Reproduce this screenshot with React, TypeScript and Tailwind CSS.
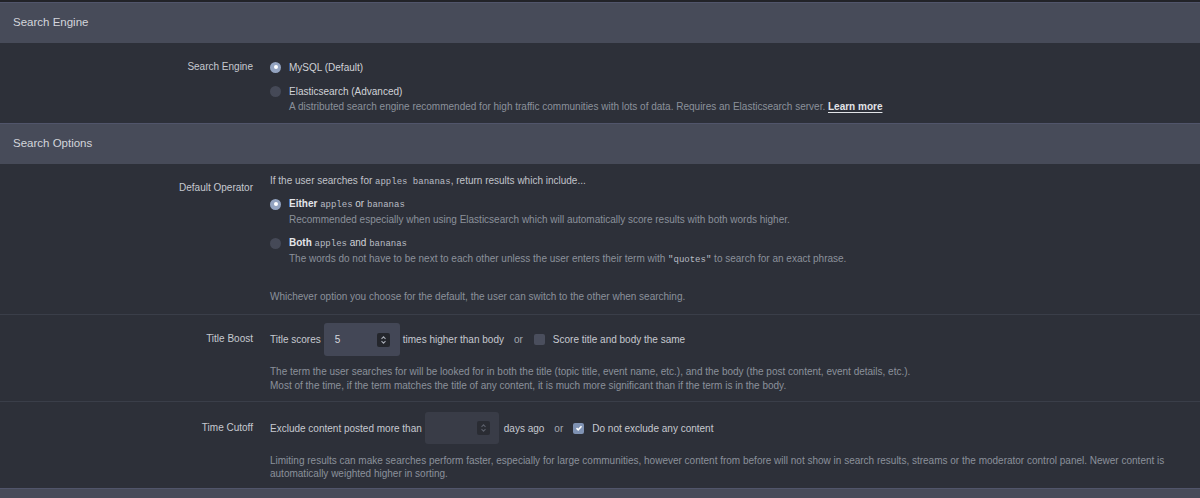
import React from "react";

const font = "font-['Liberation_Sans',Arial,sans-serif]";
const mono = "font-['Liberation_Mono',monospace] text-[9px] text-[#b9bcc4]";

function Header({ title }: { title: string }) {
  return (
    <div className="h-[41px] bg-[#474b59] border-t border-[#51556b] px-[13px] flex items-center text-[11.5px] text-[#d3d5db]">
      {title}
    </div>
  );
}

function Row({
  label,
  labelClass = "",
  className = "",
  last = false,
  children,
}: {
  label: string;
  labelClass?: string;
  className?: string;
  last?: boolean;
  children: React.ReactNode;
}) {
  return (
    <div className={`flex ${last ? "" : "border-b border-[#3a3e49]"} ${className}`}>
      <div className={`w-[253px] shrink-0 text-right text-[#c6c9d0] leading-[16px] ${labelClass}`}>{label}</div>
      <div className="ml-[17px] flex-1 min-w-0">{children}</div>
    </div>
  );
}

function Radio({ checked }: { checked?: boolean }) {
  return checked ? (
    <span className="w-[11px] h-[11px] rounded-full bg-[#93a3c0] flex items-center justify-center shrink-0">
      <span className="w-[4px] h-[4px] rounded-full bg-white" />
    </span>
  ) : (
    <span className="w-[11px] h-[11px] rounded-full bg-[#454957] shrink-0" />
  );
}

function Option({
  checked,
  children,
  desc,
}: {
  checked?: boolean;
  children: React.ReactNode;
  desc?: React.ReactNode;
}) {
  return (
    <div>
      <div className="flex items-center h-[16px]">
        <Radio checked={checked} />
        <span className="ml-[8px] text-[#d0d2d7]">{children}</span>
      </div>
      {desc && <div className="pl-[19px] text-[#8b909b] leading-[16px]">{desc}</div>}
    </div>
  );
}

function Spinner({ dim }: { dim?: boolean }) {
  return (
    <span className={`w-[13px] h-[14px] rounded-[2px] ${dim ? "bg-[#2a2c33]" : "bg-[#24262c]"} flex items-center justify-center`}>
      <svg width="7" height="10" viewBox="0 0 7 10" fill="none" stroke={dim ? "#5a5e69" : "#a7abb5"} strokeWidth="1.1">
        <path d="M1.5 3.8 L3.5 1.8 L5.5 3.8" />
        <path d="M1.5 6.2 L3.5 8.2 L5.5 6.2" />
      </svg>
    </span>
  );
}

function Checkbox({ checked }: { checked?: boolean }) {
  return checked ? (
    <span className="w-[11px] h-[11px] rounded-[2px] bg-[#7f92b3] flex items-center justify-center shrink-0">
      <svg width="8" height="8" viewBox="0 0 8 8" fill="none" stroke="white" strokeWidth="1.6">
        <path d="M1.5 4.2 L3.2 5.8 L6.5 2.2" />
      </svg>
    </span>
  ) : (
    <span className="block w-[11px] h-[11px] rounded-[2px] bg-[#4a4e5d] shrink-0" />
  );
}

export default function App() {
  return (
    <div className={`min-h-screen bg-[#2d3039] text-[10px] ${font}`}>
      <div className="h-[2px] bg-[#222328]" />
      <Header title="Search Engine" />

      <Row label="Search Engine" className="pt-[16px] pb-[8px]" last>
        <div className="flex flex-col gap-[8px]">
          <Option checked>MySQL (Default)</Option>
          <Option
            desc={
              <>
                A distributed search engine recommended for high traffic communities with lots of data. Requires an
                Elasticsearch server.{" "}
                <span className="text-[#e2e4e8] font-bold underline underline-offset-2">Learn more</span>
              </>
            }
          >
            Elasticsearch (Advanced)
          </Option>
        </div>
      </Row>

      <Header title="Search Options" />

      <Row label="Default Operator" labelClass="mt-[7px]" className="pt-[9px] pb-[9px]">
        <div className="leading-[16px] text-[#c0c3ca]">
          If the user searches for <span className={mono}>apples bananas</span>, return results which include...
        </div>
        <div className="mt-[6px] flex flex-col gap-[7px]">
          <Option
            checked
            desc="Recommended especially when using Elasticsearch which will automatically score results with both words higher."
          >
            <b className="text-[#e3e5e9]">Either</b> <span className={mono}>apples</span> or{" "}
            <span className={mono}>bananas</span>
          </Option>
          <Option
            desc={
              <>
                The words do not have to be next to each other unless the user enters their term with{" "}
                <span className={mono}>"quotes"</span> to search for an exact phrase.
              </>
            }
          >
            <b className="text-[#e3e5e9]">Both</b> <span className={mono}>apples</span> and{" "}
            <span className={mono}>bananas</span>
          </Option>
        </div>
        <div className="mt-[21px] leading-[16px] text-[#8b909b]">
          Whichever option you choose for the default, the user can switch to the other when searching.
        </div>
      </Row>

      <Row label="Title Boost" labelClass="mt-[8px]" className="pt-[8px] pb-[8px]">
        <div className="flex items-center h-[33px] text-[#c6c9d0]">
          <span>Title scores</span>
          <div className="ml-[3px] w-[76px] h-[33px] bg-[#434756] rounded-[3px] flex items-center justify-between pl-[11px] pr-[10px]">
            <span className="text-[#d7d9de]">5</span>
            <Spinner />
          </div>
          <span className="ml-[3px]">times higher than body</span>
          <span className="ml-[10px] text-[#a4a8b1]">or</span>
          <span className="ml-[11px]"><Checkbox /></span>
          <span className="ml-[8px]">Score title and body the same</span>
        </div>
        <div className="mt-[9px] leading-[14px] text-[#8b909b]">
          <div>
            The term the user searches for will be looked for in both the title (topic title, event name, etc.), and the
            body (the post content, event details, etc.).
          </div>
          <div>Most of the time, if the term matches the title of any content, it is much more significant than if the term is in the body.</div>
        </div>
      </Row>

      <Row label="Time Cutoff" labelClass="mt-[8px]" className="pt-[10px] pb-[8px]" last>
        <div className="flex items-center h-[32px] text-[#c6c9d0]">
          <span>Exclude content posted more than</span>
          <div className="ml-[3px] w-[74px] h-[32px] bg-[#393c47] rounded-[3px] flex items-center justify-end pr-[9px]">
            <Spinner dim />
          </div>
          <span className="ml-[5px]">days ago</span>
          <span className="ml-[10px] text-[#a4a8b1]">or</span>
          <span className="ml-[10px]"><Checkbox checked /></span>
          <span className="ml-[8px]">Do not exclude any content</span>
        </div>
        <div className="mt-[10px] leading-[13px] text-[#8b909b] pr-[10px]">
          Limiting results can make searches perform faster, especially for large communities, however content from
          before will not show in search results, streams or the moderator control panel. Newer content is
          automatically weighted higher in sorting.
        </div>
      </Row>

      <div className="h-[10px] bg-[#474b59] border-t border-[#51556b]" />
    </div>
  );
}
